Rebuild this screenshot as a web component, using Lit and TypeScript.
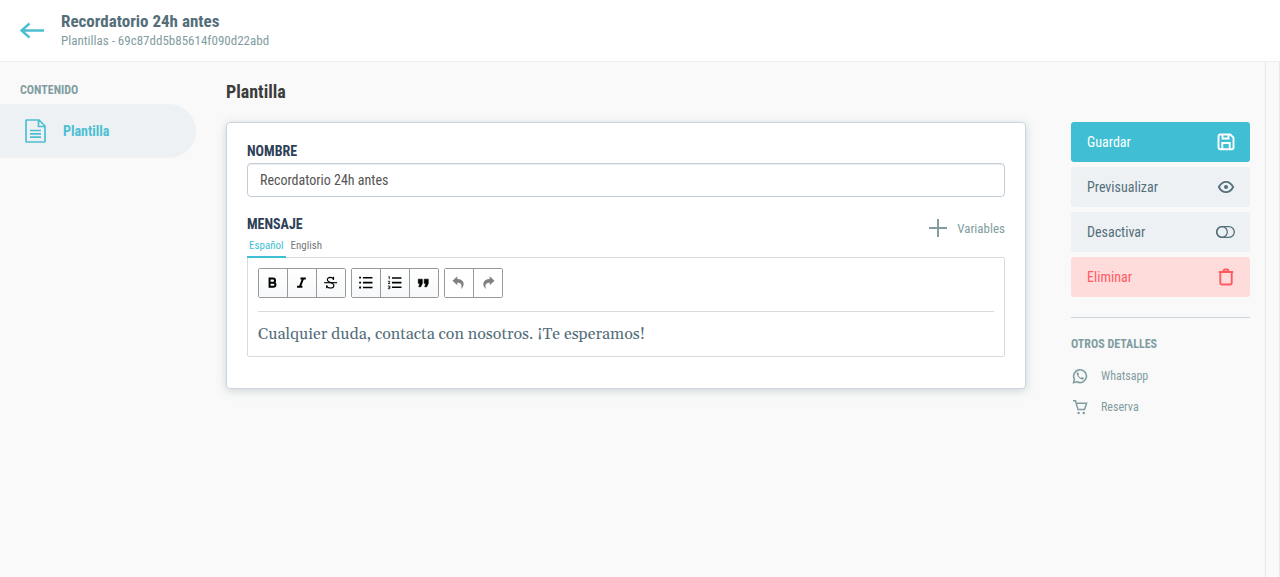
import { LitElement, html, svg, css } from "lit";
import { customElement, property, state } from "lit/decorators.js";
import { classMap } from "lit/directives/class-map.js";

const paths: Record<string, unknown> = {
  back: svg`<path d="M24 11.500H2M9.500 4.500L1.500 11.500l8 7" stroke-width="2.400"/>`,
  doc: svg`<path d="M2.800 1H15l6 6v15.200q0 .8-.8.800H2.800q-.8 0-.8-.8V1.800q0-.8.800-.8zM14.500 1v6.500H21M6 11.500h11M6 14.800h11M6 18.200h11" stroke-width="1.700"/>`,
  plus: svg`<path d="M9 0v18M0 9h18" stroke-width="2"/>`,
  save: svg`<path d="M3.300 1.500h10l3.200 3.200v9.800a1.800 1.800 0 0 1-1.800 1.800h-11.400a1.800 1.800 0 0 1-1.800-1.800v-11.200a1.800 1.800 0 0 1 1.800-1.800zM5.500 1.500v4h6v-4M5.300 16V10h7.400V16" stroke-width="1.900"/>`,
  eye: svg`<path d="M1.800 9C5.500 2.100 12.500 2.100 16.200 9C12.500 15.900 5.500 15.900 1.800 9z" stroke-width="1.800"/><circle cx="9" cy="9" r="2" fill="currentColor" stroke="none"/>`,
  toggle: svg`<rect x="0.700" y="3.700" width="17.600" height="10.600" rx="5.300" stroke-width="1.300"/><circle cx="6" cy="9" r="5.300" stroke-width="1.300"/>`,
  trash: svg`<path d="M1.800 4h14.400M3.300 4v10.700a1.800 1.800 0 0 0 1.800 1.800h7.800a1.800 1.800 0 0 0 1.800-1.800V4M6.500 3.500q0-2 1.500-2h2q1.500 0 1.500 2" stroke-width="1.900"/>`,
  whatsapp: svg`<path d="M1.600 14.600l.8-3.400A6.400 6.400 0 1 1 5 13.800z" stroke-width="1.600"/><path d="M5.300 4.400c-.8.700-.8 1.700-.2 2.900.9 1.900 2 3 3.900 3.900 1.200.5 2.200.4 2.800-.5l-.1-.9-1.700-.8-1 .9C7.700 9.300 6.900 8.500 6.300 7.300l.8-1-.8-1.800z" fill="currentColor" stroke="none"/>`,
  cart: svg`<path d="M1 1.700h2.500L6 10.600h6.500L14.600 4.300H4" stroke-width="1.500"/><circle cx="6.600" cy="14" r="1.200" fill="currentColor" stroke="none"/><circle cx="11.800" cy="14" r="1.200" fill="currentColor" stroke="none"/>`,
  bold: svg`<path d="M6 4.200h4.500a2.700 2.700 0 0 1 0 5.400H6zM6 9.600h5a2.700 2.700 0 0 1 0 5.400H6z" stroke-width="2.600"/>`,
  italic: svg`<path d="M8.500 4H15.500M4 14.800h7M12 4L7.800 14.800" stroke-width="2.600"/>`,
  strike: svg`<path d="M14 5.800C13 1.600 5.700 1.700 5.700 5.600c0 4 8.600 3.500 8.600 7.700 0 4.600-8.400 4.300-9.600-.3M13.800 1.800v4.200M4.800 17v-4" stroke-width="1.500"/><path d="M1.500 9.600h17" stroke-width="1.500"/>`,
  bullets: svg`<path d="M6.500 3H19M6.500 9.500H19M6.500 16H19" stroke-width="2"/><path d="M1.500 3h2.500M1.500 9.500h2.500M1.500 16h2.500" stroke-width="2.500"/>`,
  numbers: svg`<path d="M6.500 3.500H19M6.500 9.500H19M6.500 15.500H19" stroke-width="2"/><path d="M1.800 2l1.200-.6V5M1.200 7.800h2.300v1.300l-2 1.700h2.500M1.200 14h2.500v3.500H1.200M2 15.700h1.700" stroke-width="1.100"/>`,
  quote: svg`<path d="M3 5h5.300v5.500L6.300 15H3.600l1.500-4.500H3zM10.800 5h5.300v5.500l-2 4.500h-2.700l1.500-4.500h-2.100z" fill="currentColor" stroke-width=".8"/>`,
  undo: svg`<path d="M8.300 1L2 7l6.300 6V9.600c5-.2 6.800 3 4.800 8.400C19.500 12.500 17 4.800 8.300 4.600z" fill="currentColor" stroke="none"/>`,
  redo: svg`<path d="M12.700 1L19 7l-6.300 6V9.600c-5-.2-6.800 3-4.800 8.400C1.500 12.500 4 4.800 12.700 4.600z" fill="currentColor" stroke="none"/>`,
};

const icon = (name: string, width: number, height = width, box = `0 0 ${width} ${height}`) => html`
  <svg width=${width} height=${height} viewBox=${box} fill="none" stroke="currentColor" aria-hidden="true">${paths[name]}</svg>
`;

const base = css`
  * { box-sizing: border-box; }
  svg { display: block; flex: none; }
  button, input, textarea { font: inherit; color: inherit; }
  button { margin: 0; padding: 0; border: 0; background: none; cursor: pointer; }
`;

@customElement("message-editor")
class MessageEditor extends LitElement {
  @property() value = "";
  @state() private language = "es";

  static styles = [base, css`
    :host { display: block; }
    .head { display: flex; justify-content: space-between; align-items: flex-end; }
    .label { display: block; font-size: 14px; line-height: 20px; font-weight: 700; color: #2e4057; }
    .tabs { display: flex; gap: 3px; }
    .tab { height: 24px; padding: 2px 2px 0; font-size: 11px; line-height: 20px; border-bottom: 2px solid transparent; color: #777; }
    .active { color: #40bfd4; border-color: #40bfd4; }
    .variables { display: flex; align-items: center; gap: 10px; height: 20px; margin-bottom: 20px; font-size: 13px; color: #829da1; }
    .box { margin-top: -1px; border: 1px solid #d9dcdc; border-radius: 0 2px 2px 2px; padding: 10px; }
    .tabs { position: relative; z-index: 1; }
    .toolbar { display: flex; gap: 5px; padding-bottom: 13px; border-bottom: 1px solid #dadada; }
    .group { display: flex; border: 1px solid #999; border-radius: 2px; }
    .tool { display: grid; place-items: center; width: 29px; height: 28px; color: #000; background: linear-gradient(#fff, #f6f8f9); }
    .tool:first-child { width: 28px; }
    .tool + .tool { border-left: 1px solid #999; }
    .tool:disabled { color: #808080; background: #fff; cursor: default; }
    .text { display: block; width: 100%; height: 24px; margin-top: 10px; padding: 0; border: 0; outline: 0; resize: none; overflow: hidden; background: none; font-family: Georgia, Gelasio, "Liberation Serif", serif; font-size: 16px; line-height: 24px; color: #546e7a; }
  `];

  private tool(name: string, label: string, disabled = false) {
    return html`<button class="tool" type="button" aria-label=${label} ?disabled=${disabled}>${icon(name, 16, 16, "0 0 21 20")}</button>`;
  }

  private tab(code: string, label: string) {
    return html`<button type="button" role="tab" aria-selected=${this.language === code}
      class=${classMap({ tab: true, active: this.language === code })}
      @click=${() => (this.language = code)}>${label}</button>`;
  }

  render() {
    return html`
      <div class="head">
        <div>
          <label class="label" for="message">MENSAJE</label>
          <div class="tabs" role="tablist">${this.tab("es", "Español")}${this.tab("en", "English")}</div>
        </div>
        <button class="variables" type="button">${icon("plus", 18)}Variables</button>
      </div>
      <div class="box">
        <div class="toolbar" role="toolbar">
          <div class="group">${this.tool("bold", "Negrita")}${this.tool("italic", "Cursiva")}${this.tool("strike", "Tachado")}</div>
          <div class="group">${this.tool("bullets", "Lista")}${this.tool("numbers", "Lista numerada")}${this.tool("quote", "Cita")}</div>
          <div class="group">${this.tool("undo", "Deshacer", true)}${this.tool("redo", "Rehacer", true)}</div>
        </div>
        <textarea class="text" id="message" rows="1" .value=${this.value}></textarea>
      </div>
    `;
  }
}

@customElement("app-root")
class AppRoot extends LitElement {
  static styles = [base, css`
    :host { display: flex; flex-direction: column; min-height: 100vh; background: #f9f9f9; font-family: "Roboto Condensed", "Liberation Sans Narrow", Roboto, sans-serif; color: #546e7a; }
    .header { display: flex; align-items: center; gap: 16px; padding: 11px 20px 10px; background: #fff; border-bottom: 1px solid #eee; }
    .back { display: block; color: #4dbfd3; }
    .title { margin: 0; font-size: 17px; line-height: 20px; font-weight: 700; }
    .path { margin: 0; font-size: 13px; line-height: 20px; color: #829da1; }
    .body { display: flex; flex: 1; }
    .nav { width: 196px; padding-top: 20px; }
    .caption { margin: 0; font-size: 12px; line-height: 16px; font-weight: 700; color: #829da1; }
    .nav .caption { padding-left: 20px; }
    .link { display: flex; align-items: center; gap: 15px; height: 54px; margin-top: 6px; padding-left: 24px; border-radius: 0 27px 27px 0; background: #edf1f4; color: #4dbfd3; font-size: 14px; font-weight: 700; text-decoration: none; }
    .main { flex: 1; min-width: 0; margin: 0 45px 0 30px; padding-top: 18px; }
    .heading { margin: 0 0 18px; font-size: 18px; line-height: 24px; font-weight: 700; color: #3c3c3b; }
    .card { padding: 18px 20px 31px; border: 1px solid #cbd5e2; border-radius: 4px; background: #fff; box-shadow: 0 2px 10px rgba(84, 110, 110, 0.25); }
    .label { display: block; font-size: 14px; line-height: 20px; font-weight: 700; color: #2e4057; }
    .input { display: block; width: 100%; height: 34px; margin: 2px 0 17px; padding: 0 12px; border: 1px solid #c2ccd6; border-radius: 4px; background: #fff; box-shadow: inset 0 1px 1px rgba(0, 0, 0, 0.07); font-size: 14px; color: #555; }
    .side { width: 179px; margin-right: 15px; padding-top: 60px; }
    .actions { display: grid; gap: 5px; padding-bottom: 20px; border-bottom: 1px solid #cdd5de; }
    .action { display: flex; align-items: center; justify-content: space-between; height: 40px; padding: 0 15px 0 16px; border-radius: 3px; background: #edf1f4; font-size: 14px; }
    .primary { background: #40bfd4; color: #fff; }
    .danger { background: #ffdcdc; color: #ff5a5f; }
    .side .caption { margin-top: 18px; }
    .details { display: grid; gap: 15px; margin: 16px 0 0; padding: 0 0 0 1px; list-style: none; font-size: 12px; line-height: 16px; color: #829da1; }
    .detail { display: flex; align-items: center; gap: 13px; }
    .gutter { width: 15px; border: solid #e8e8e8; border-width: 0 1px; background: #fafafa; }
  `];

  render() {
    return html`
      <header class="header">
        <a class="back" href="#" aria-label="Volver">${icon("back", 25, 24)}</a>
        <div>
          <h1 class="title">Recordatorio 24h antes</h1>
          <p class="path">Plantillas - 69c87dd5b85614f090d22abd</p>
        </div>
      </header>
      <div class="body">
        <nav class="nav">
          <h2 class="caption">CONTENIDO</h2>
          <a class="link" href="#">${icon("doc", 24, 24)}Plantilla</a>
        </nav>
        <main class="main">
          <h2 class="heading">Plantilla</h2>
          <section class="card">
            <label class="label" for="name">NOMBRE</label>
            <input class="input" id="name" type="text" value="Recordatorio 24h antes">
            <message-editor value="Cualquier duda, contacta con nosotros. ¡Te esperamos!"></message-editor>
          </section>
        </main>
        <aside class="side">
          <div class="actions">
            <button class="action primary" type="button">Guardar${icon("save", 18)}</button>
            <button class="action" type="button">Previsualizar${icon("eye", 18)}</button>
            <button class="action" type="button">Desactivar${icon("toggle", 19, 18)}</button>
            <button class="action danger" type="button">Eliminar${icon("trash", 18)}</button>
          </div>
          <h2 class="caption">OTROS DETALLES</h2>
          <ul class="details">
            <li class="detail">${icon("whatsapp", 16)}Whatsapp</li>
            <li class="detail">${icon("cart", 16)}Reserva</li>
          </ul>
        </aside>
        <div class="gutter"></div>
      </div>
    `;
  }
}
